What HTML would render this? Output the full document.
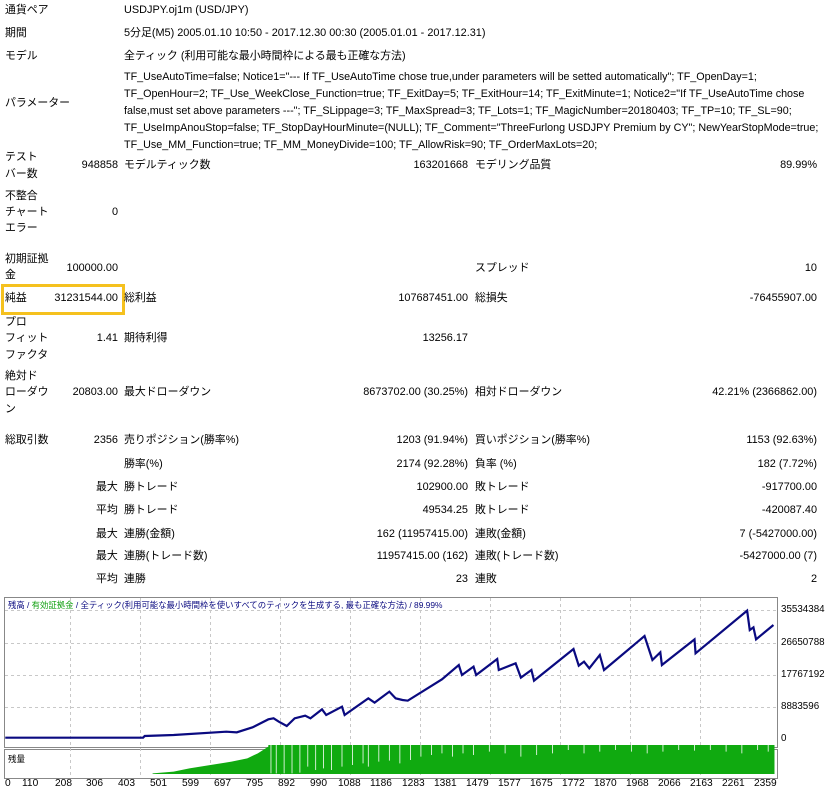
<!DOCTYPE html>
<html><head><meta charset="utf-8"><style>
body{margin:0;width:825px;height:792px;background:#fff;position:relative;overflow:hidden;font-family:"Liberation Sans","Noto Sans CJK JP",sans-serif;font-size:10.9px;color:#000}
.t{position:absolute;line-height:16px;white-space:nowrap}
.r{position:absolute;line-height:16px;white-space:nowrap;text-align:right}
.p{position:absolute;left:124px;line-height:17.2px;font-size:10.75px;white-space:nowrap}
.yl{position:absolute;left:781px;font-size:9.8px;line-height:12px}
.xl{position:absolute;top:778px;font-size:10.2px;line-height:12px}
</style></head><body>
<div class="t" style="left:5px;top:2px">通貨ペア</div><div class="t" style="left:124px;top:2px">USDJPY.oj1m (USD/JPY)</div>
<div class="t" style="left:5px;top:25px">期間</div><div class="t" style="left:124px;top:25px">5分足(M5) 2005.01.10 10:50 - 2017.12.30 00:30 (2005.01.01 - 2017.12.31)</div>
<div class="t" style="left:5px;top:48px">モデル</div><div class="t" style="left:124px;top:48px">全ティック (利用可能な最小時間枠による最も正確な方法)</div>
<div class="t" style="left:5px;top:95px">パラメーター</div>
<div class="p" style="top:69px">TF_UseAutoTime=false; Notice1="--- If TF_UseAutoTime chose true,under parameters will be setted automatically"; TF_OpenDay=1;</div>
<div class="p" style="top:86px">TF_OpenHour=2; TF_Use_WeekClose_Function=true; TF_ExitDay=5; TF_ExitHour=14; TF_ExitMinute=1; Notice2="If TF_UseAutoTime chose</div>
<div class="p" style="top:103px">false,must set above parameters ---"; TF_SLippage=3; TF_MaxSpread=3; TF_Lots=1; TF_MagicNumber=20180403; TF_TP=10; TF_SL=90;</div>
<div class="p" style="top:120px">TF_UseImpAnouStop=false; TF_StopDayHourMinute=(NULL); TF_Comment="ThreeFurlong USDJPY Premium by CY"; NewYearStopMode=true;</div>
<div class="p" style="top:137px">TF_Use_MM_Function=true; TF_MM_MoneyDivide=100; TF_AllowRisk=90; TF_OrderMaxLots=20;</div>

<div class="t" style="left:5px;top:149px">テスト</div><div class="t" style="left:5px;top:166px">バー数</div>
<div class="r" style="right:707px;top:157px">948858</div><div class="t" style="left:124px;top:157px">モデルティック数</div>
<div class="r" style="right:357px;top:157px">163201668</div><div class="t" style="left:475px;top:157px">モデリング品質</div><div class="r" style="right:8px;top:157px">89.99%</div>

<div class="t" style="left:5px;top:188px">不整合</div><div class="t" style="left:5px;top:204px">チャート</div><div class="t" style="left:5px;top:220px">エラー</div>
<div class="r" style="right:707px;top:204px">0</div>

<div class="t" style="left:5px;top:251px">初期証拠</div><div class="t" style="left:5px;top:267px">金</div>
<div class="r" style="right:707px;top:260px">100000.00</div>
<div class="t" style="left:475px;top:260px">スプレッド</div><div class="r" style="right:8px;top:260px">10</div>

<div style="position:absolute;left:1px;top:284px;width:118px;height:25px;border:3px solid #f5c11e"></div>
<div class="t" style="left:5px;top:290px">純益</div><div class="r" style="right:707px;top:290px">31231544.00</div>
<div class="t" style="left:124px;top:290px">総利益</div><div class="r" style="right:357px;top:290px">107687451.00</div>
<div class="t" style="left:475px;top:290px">総損失</div><div class="r" style="right:8px;top:290px">-76455907.00</div>

<div class="t" style="left:5px;top:314px">プロ</div><div class="t" style="left:5px;top:330px">フィット</div><div class="t" style="left:5px;top:347px">ファクタ</div>
<div class="r" style="right:707px;top:330px">1.41</div><div class="t" style="left:124px;top:330px">期待利得</div><div class="r" style="right:357px;top:330px">13256.17</div>

<div class="t" style="left:5px;top:368px">絶対ド</div><div class="t" style="left:5px;top:384px">ローダウ</div><div class="t" style="left:5px;top:401px">ン</div>
<div class="r" style="right:707px;top:384px">20803.00</div><div class="t" style="left:124px;top:384px">最大ドローダウン</div><div class="r" style="right:357px;top:384px">8673702.00 (30.25%)</div>
<div class="t" style="left:475px;top:384px">相対ドローダウン</div><div class="r" style="right:8px;top:384px">42.21% (2366862.00)</div>

<div class="t" style="left:5px;top:432px">総取引数</div><div class="r" style="right:707px;top:432px">2356</div>
<div class="t" style="left:124px;top:432px">売りポジション(勝率%)</div><div class="r" style="right:357px;top:432px">1203 (91.94%)</div>
<div class="t" style="left:475px;top:432px">買いポジション(勝率%)</div><div class="r" style="right:8px;top:432px">1153 (92.63%)</div>

<div class="t" style="left:124px;top:456px">勝率(%)</div><div class="r" style="right:357px;top:456px">2174 (92.28%)</div>
<div class="t" style="left:475px;top:456px">負率 (%)</div><div class="r" style="right:8px;top:456px">182 (7.72%)</div>

<div class="t" style="left:96px;top:479px">最大</div><div class="t" style="left:124px;top:479px">勝トレード</div><div class="r" style="right:357px;top:479px">102900.00</div>
<div class="t" style="left:475px;top:479px">敗トレード</div><div class="r" style="right:8px;top:479px">-917700.00</div>

<div class="t" style="left:96px;top:502px">平均</div><div class="t" style="left:124px;top:502px">勝トレード</div><div class="r" style="right:357px;top:502px">49534.25</div>
<div class="t" style="left:475px;top:502px">敗トレード</div><div class="r" style="right:8px;top:502px">-420087.40</div>

<div class="t" style="left:96px;top:526px">最大</div><div class="t" style="left:124px;top:526px">連勝(金額)</div><div class="r" style="right:357px;top:526px">162 (11957415.00)</div>
<div class="t" style="left:475px;top:526px">連敗(金額)</div><div class="r" style="right:8px;top:526px">7 (-5427000.00)</div>

<div class="t" style="left:96px;top:548px">最大</div><div class="t" style="left:124px;top:548px">連勝(トレード数)</div><div class="r" style="right:357px;top:548px">11957415.00 (162)</div>
<div class="t" style="left:475px;top:548px">連敗(トレード数)</div><div class="r" style="right:8px;top:548px">-5427000.00 (7)</div>

<div class="t" style="left:96px;top:571px">平均</div><div class="t" style="left:124px;top:571px">連勝</div><div class="r" style="right:357px;top:571px">23</div>
<div class="t" style="left:475px;top:571px">連敗</div><div class="r" style="right:8px;top:571px">2</div>

<svg style="position:absolute;left:0;top:590px" width="825" height="202" viewBox="0 0 825 202">
<rect x="4.5" y="7.5" width="773" height="150" fill="#fff" stroke="#888"/>
<rect x="4.5" y="159.5" width="773" height="29" fill="#fff" stroke="#888"/>
<g stroke="#c8c8c8" stroke-dasharray="3,3" stroke-width="1">
<line x1="5" y1="20.5" x2="777" y2="20.5"/><line x1="5" y1="53.5" x2="777" y2="53.5"/><line x1="5" y1="85.5" x2="777" y2="85.5"/><line x1="5" y1="117.5" x2="777" y2="117.5"/>
<path d="M70.5 8V188M140.5 8V188M210.5 8V188M280.5 8V188M350.5 8V188M420.5 8V188M490.5 8V188M560.5 8V188M630.5 8V188M700.5 8V188"/>
</g>
<svg x="0" y="0" width="825" height="202" viewBox="0 0 1568 606" preserveAspectRatio="none">
<polygon fill="#10aa10" points="290,550 330,545 360,535 400,525 440,515 470,505 490,490 510,470 510,465 1472,465 1472,552 290,552"/>
<g stroke="#fff" stroke-width="1.5" vector-effect="non-scaling-stroke">
<path d="M515 465V550M525 465V550M540 465V550M555 465V550M570 465V548M585 465V530M600 465V540M615 465V535M630 465V540M650 465V530M670 465V525M690 465V520M700 465V530M720 465V515M740 465V512M760 465V520M780 465V510M800 465V500M820 465V495M840 465V490M860 465V500M880 465V490M900 465V495M930 465V485M960 465V490M990 465V500M1020 465V495M1050 465V490M1080 465V480M1110 465V490M1140 465V485M1170 465V480M1200 465V485M1230 465V490M1260 465V485M1290 465V480M1320 465V482M1350 465V480M1380 465V485M1410 465V490M1440 465V480M1460 465V485"/>
</g>
<polyline fill="none" stroke="#0a0a80" stroke-width="2.2" vector-effect="non-scaling-stroke" points="10,443 272,443 275,438 330,435 430,425 450,427 480,412 510,388 520,385 530,395 545,408 560,385 580,377 590,385 612,358 620,375 650,350 655,375 700,325 712,338 740,305 752,325 765,330 775,332 840,268 872,225 878,255 900,230 905,255 945,207 948,240 980,220 990,263 1010,240 1015,272 1090,177 1100,227 1110,215 1120,235 1140,195 1148,240 1225,138 1240,210 1255,187 1258,225 1320,148 1322,190 1420,62 1425,120 1432,112 1437,148 1470,105"/>
</svg>
<text x="8" y="18" font-size="8.4" fill="#0a0a80" font-family="Liberation Sans,Noto Sans CJK JP,sans-serif">残高</text>
<text x="27" y="18" font-size="8.4" fill="#0a0a80" font-family="Liberation Sans,Noto Sans CJK JP,sans-serif">/ <tspan fill="#10a010">有効証拠金</tspan> / 全ティック(利用可能な最小時間枠を使いすべてのティックを生成する, 最も正確な方法) / 89.99%</text>
<text x="8" y="172" font-size="8.5" font-family="Liberation Sans,Noto Sans CJK JP,sans-serif">残量</text>
</svg>
<div class="yl" style="top:604px">35534384</div>
<div class="yl" style="top:637px">26650788</div>
<div class="yl" style="top:669px">17767192</div>
<div class="yl" style="top:701px">8883596</div>
<div class="yl" style="top:733px">0</div>
<div class="xl" style="left:5px">0</div><div class="xl" style="left:22px">110</div><div class="xl" style="left:55px">208</div><div class="xl" style="left:86px">306</div><div class="xl" style="left:118px">403</div><div class="xl" style="left:150px">501</div><div class="xl" style="left:182px">599</div><div class="xl" style="left:214px">697</div><div class="xl" style="left:246px">795</div><div class="xl" style="left:278px">892</div><div class="xl" style="left:310px">990</div><div class="xl" style="left:338px">1088</div><div class="xl" style="left:370px">1186</div><div class="xl" style="left:402px">1283</div><div class="xl" style="left:434px">1381</div><div class="xl" style="left:466px">1479</div><div class="xl" style="left:498px">1577</div><div class="xl" style="left:530px">1675</div><div class="xl" style="left:562px">1772</div><div class="xl" style="left:594px">1870</div><div class="xl" style="left:626px">1968</div><div class="xl" style="left:658px">2066</div><div class="xl" style="left:690px">2163</div><div class="xl" style="left:722px">2261</div><div class="xl" style="left:754px">2359</div>
</body></html>
